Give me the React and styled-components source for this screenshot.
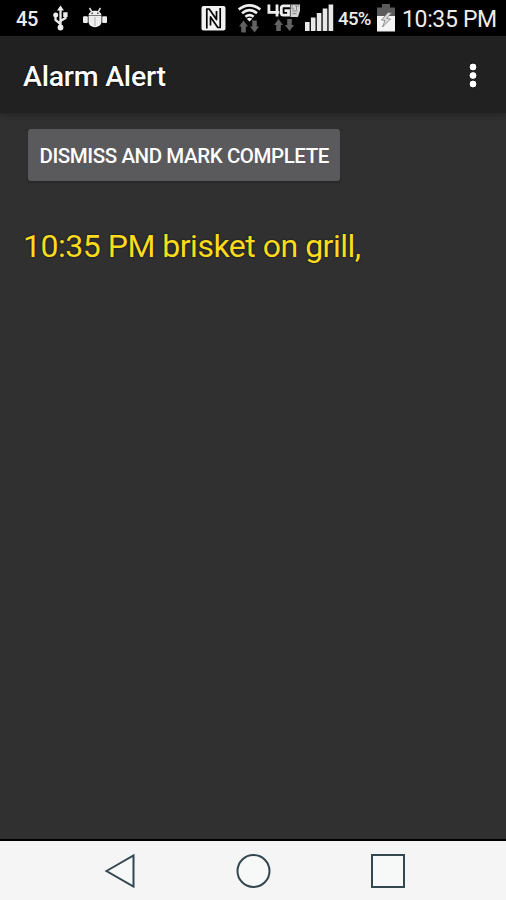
import React from 'react';
import styled, { createGlobalStyle } from 'styled-components';

const GlobalStyle = createGlobalStyle`
  * { box-sizing: border-box; }
  body { margin: 0; background: #303030; }
`;

const Screen = styled.div`
  width: 506px;
  height: 900px;
  display: flex;
  flex-direction: column;
  overflow: hidden;
  background: #303030;
  color: #fff;
  font-family: Roboto, sans-serif;
`;

const StatusBar = styled.header`
  height: 36px;
  flex: none;
  display: flex;
  justify-content: space-between;
  padding: 0 9px 0 16px;
  background: #000;
`;

const StatusGroup = styled.div`
  display: flex;
  align-items: center;
  height: 36px;
`;

const StatusIcon = styled.svg`
  display: block;
  flex: none;
  height: 36px;
  margin-right: ${(p) => p.$gap || 0}px;
`;

const StatusText = styled.span`
  flex: none;
  width: ${(p) => p.$width}px;
  margin-right: ${(p) => p.$gap || 0}px;
  padding-top: 3px;
  font-size: ${(p) => p.$size}px;
  font-weight: ${(p) => p.$weight || 400};
  letter-spacing: ${(p) => p.$spacing || 0}px;
  line-height: 33px;
  white-space: nowrap;
  color: #ececec;
`;

const AppBar = styled.div`
  height: 77px;
  flex: none;
  display: flex;
  align-items: center;
  justify-content: space-between;
  padding: 3px 26px 0 23px;
  background: #212121;
  box-shadow: 0 1px 7px rgba(0, 0, 0, 0.36);
  z-index: 1;
`;

const Title = styled.h1`
  margin: 0;
  padding-top: 2px;
  font-size: 28.5px;
  font-weight: 500;
  line-height: 36px;
  letter-spacing: -0.22px;
  white-space: nowrap;
  text-shadow: 0 0 2px #000;
`;

const MenuButton = styled.button`
  display: flex;
  padding: 0;
  border: 0;
  background: none;
`;

const Content = styled.main`
  flex: 1;
  display: flex;
  flex-direction: column;
  align-items: flex-start;
  padding: 16px 23px;
`;

const DismissButton = styled.button`
  width: 312px;
  height: 52px;
  margin: 0 0 0 5px;
  padding: 1px 0 0 11.5px;
  border: 0;
  border-radius: 3px;
  background: #5a595b;
  box-shadow: 0 1px 2px rgba(0, 0, 0, 0.3);
  color: #fff;
  font: 500 20.5px/26px Roboto, sans-serif;
  letter-spacing: -0.42px;
  text-align: left;
  white-space: nowrap;
`;

const Message = styled.p`
  margin: 45px 0 0;
  font-size: 32px;
  line-height: 40px;
  letter-spacing: -0.49px;
  white-space: nowrap;
  color: #fbdc1c;
  text-shadow: 0 0 2px #05051c;
`;

const NavBar = styled.nav`
  height: 61px;
  flex: none;
  display: flex;
  justify-content: space-between;
  align-items: center;
  padding: 0 100px 0 103px;
  border-top: 2px solid #000;
  background: #f5f5f5;
`;

const NavIcon = styled.svg`
  display: block;
  fill: #f7f9f8;
  stroke: #34474f;
  stroke-width: 2;
`;

function DataArrows({ x, y }) {
  return (
    <g fill="#626262" transform={`translate(${x} ${y})`}>
      <path d="M4.5 0 9 6H6.8v6H2.2V6H0z" />
      <path d="M15.5 12 11 6h2.2V0h4.6v6H20z" />
    </g>
  );
}

function UsbIcon() {
  return (
    <StatusIcon width="15" viewBox="53 0 15 36" $gap={15}>
      <g fill="none" stroke="#e8e8e8" strokeWidth="2.3">
        <path d="M60.5 9v18M60.5 24l-5-4v-5M60.5 21l5-3v-4" />
      </g>
      <g fill="#eee">
        <path d="M60.5 5.5 64 10.5h-7z" />
        <circle cx="60.5" cy="27.5" r="2.9" />
        <circle cx="55.7" cy="15" r="2.5" />
        <path d="M63.2 12.3h4.4v4.6h-4.4z" />
      </g>
    </StatusIcon>
  );
}

function AndroidIcon() {
  return (
    <StatusIcon width="24" viewBox="83 0 24 36">
      <g fill="#eee">
        <path d="M88.5 15.5c0-6.5 13-6.5 13 0zM88.5 16h13v5.500c0 7.500-13 7.500-13 0z" />
        <rect x="83" y="16.3" width="4.8" height="6.7" rx="1" />
        <rect x="102.2" y="16.3" width="4.8" height="6.7" rx="1" />
      </g>
      <path d="m89.5 8 2.5 4M100.5 8 98 12" stroke="#ddd" strokeWidth="1.6" />
      <path d="M95 17v9" stroke="#aaa" />
      <circle cx="92.2" cy="13.2" r=".8" fill="#222" />
      <circle cx="97.8" cy="13.2" r=".8" fill="#222" />
    </StatusIcon>
  );
}

function NfcIcon() {
  return (
    <StatusIcon width="25" viewBox="201 0 25 36" $gap={12}>
      <rect x="201.5" y="6" width="24" height="24.5" rx="2" fill="#f2f2f2" />
      <g fill="none" stroke="#050505" strokeWidth="1.7" strokeLinejoin="round">
        <path d="M206.8 28.5V9h2.4l7.3 10.5V11" />
        <path d="M220.2 8V27.500h-2.400L210.500 17v8.500" />
      </g>
    </StatusIcon>
  );
}

function WifiIcon() {
  return (
    <StatusIcon width="23" viewBox="238 0 23 36" $gap={6}>
      <g fill="none" stroke="#eee" strokeWidth="2.7">
        <path d="M238.7 9.4q10.8-8.2 21.6 0M242 13.2q7.5-6 15 0M245.4 16.7q4.1-3.2 8.200 0" />
      </g>
      <path d="m246.8 18.7 2.700 2.800 2.700-2.800q-2.700-2-5.400 0z" fill="#eee" />
      <DataArrows x={239} y={20.5} />
    </StatusIcon>
  );
}

function LteIcon() {
  return (
    <StatusIcon width="33" viewBox="267 0 33 36" $gap={5}>
      <g fill="none" stroke="#eee" strokeWidth="2.8">
        <path d="M268.9 4.500v7.800h10.400M277 4.500v12" />
        <path d="M290 5.800h-6.500q-2.200 0-2.200 2.200v5q0 2.200 2.200 2.200h5v-4.500h-4" />
      </g>
      <path d="M290.500 4.500h9.500v6l-2 6.500h-7.500z" fill="#d2d2d2" />
      <path d="M292 5v4h2M295 6h4M296.500 6v4M292.500 11h5M292.500 13.500h4" stroke="#777" fill="none" strokeWidth=".8" />
      <DataArrows x={274} y={19} />
    </StatusIcon>
  );
}

function SignalIcon() {
  return (
    <StatusIcon width="29" viewBox="305 0 29 36" $gap={4}>
      <path d="M305 22h4.6v9H305zM310.9 17.5h4.6V31h-4.6zM316.8 13h4.6v18h-4.6zM322.7 8.5h4.6V31h-4.6zM328.6 4.5h4.6V31h-4.6z" fill="#e8e8e8" />
    </StatusIcon>
  );
}

function BatteryIcon() {
  return (
    <StatusIcon width="18" viewBox="377 0 18 36" $gap={7}>
      <path d="M382 4h8v3.5h5V17h-18V7.5h5z" fill="#5b5b5b" />
      <path d="M377 16h18v15.5h-18z" fill="#f5f5f5" />
      <path d="m388 12.5-6.5 7.5 3.5.5-2.5 6.5 8-8-4-.7 5-5.3z" fill="#ddd" stroke="#777" strokeWidth=".8" />
    </StatusIcon>
  );
}

export default function App() {
  return (
    <>
      <GlobalStyle />
      <Screen>
        <StatusBar>
          <StatusGroup>
            <StatusText $size={20} $width={22} $gap={15} $weight={500} $spacing={-0.3}>45</StatusText>
            <UsbIcon />
            <AndroidIcon />
          </StatusGroup>
          <StatusGroup>
            <NfcIcon />
            <WifiIcon />
            <LteIcon />
            <SignalIcon />
            <StatusText $size={18.5} $width={34} $gap={5} $weight={500} $spacing={-0.6}>45%</StatusText>
            <BatteryIcon />
            <StatusText $size={23} $width={95} $spacing={-0.35}>10:35 PM</StatusText>
          </StatusGroup>
        </StatusBar>
        <AppBar>
          <Title>Alarm Alert</Title>
          <MenuButton aria-label="More options">
            <svg width="14" height="28" viewBox="0 0 14 28">
              <g fill="#fff" stroke="#0b0b0b">
                <circle cx="7" cy="5" r="4" />
                <circle cx="7" cy="13.5" r="4" />
                <circle cx="7" cy="22" r="4" />
              </g>
            </svg>
          </MenuButton>
        </AppBar>
        <Content>
          <DismissButton>DISMISS AND MARK COMPLETE</DismissButton>
          <Message>10:35 PM brisket on grill,</Message>
        </Content>
        <NavBar>
          <NavIcon width="34" height="36" viewBox="0 0 34 36">
            <path d="M3.5 18 30.5 2.5v31z" />
          </NavIcon>
          <NavIcon width="36" height="36" viewBox="0 0 36 36">
            <circle cx="17.5" cy="18" r="16" />
          </NavIcon>
          <NavIcon width="36" height="36" viewBox="0 0 36 36">
            <path d="M2 2h32v32H2z" />
          </NavIcon>
        </NavBar>
      </Screen>
    </>
  );
}
